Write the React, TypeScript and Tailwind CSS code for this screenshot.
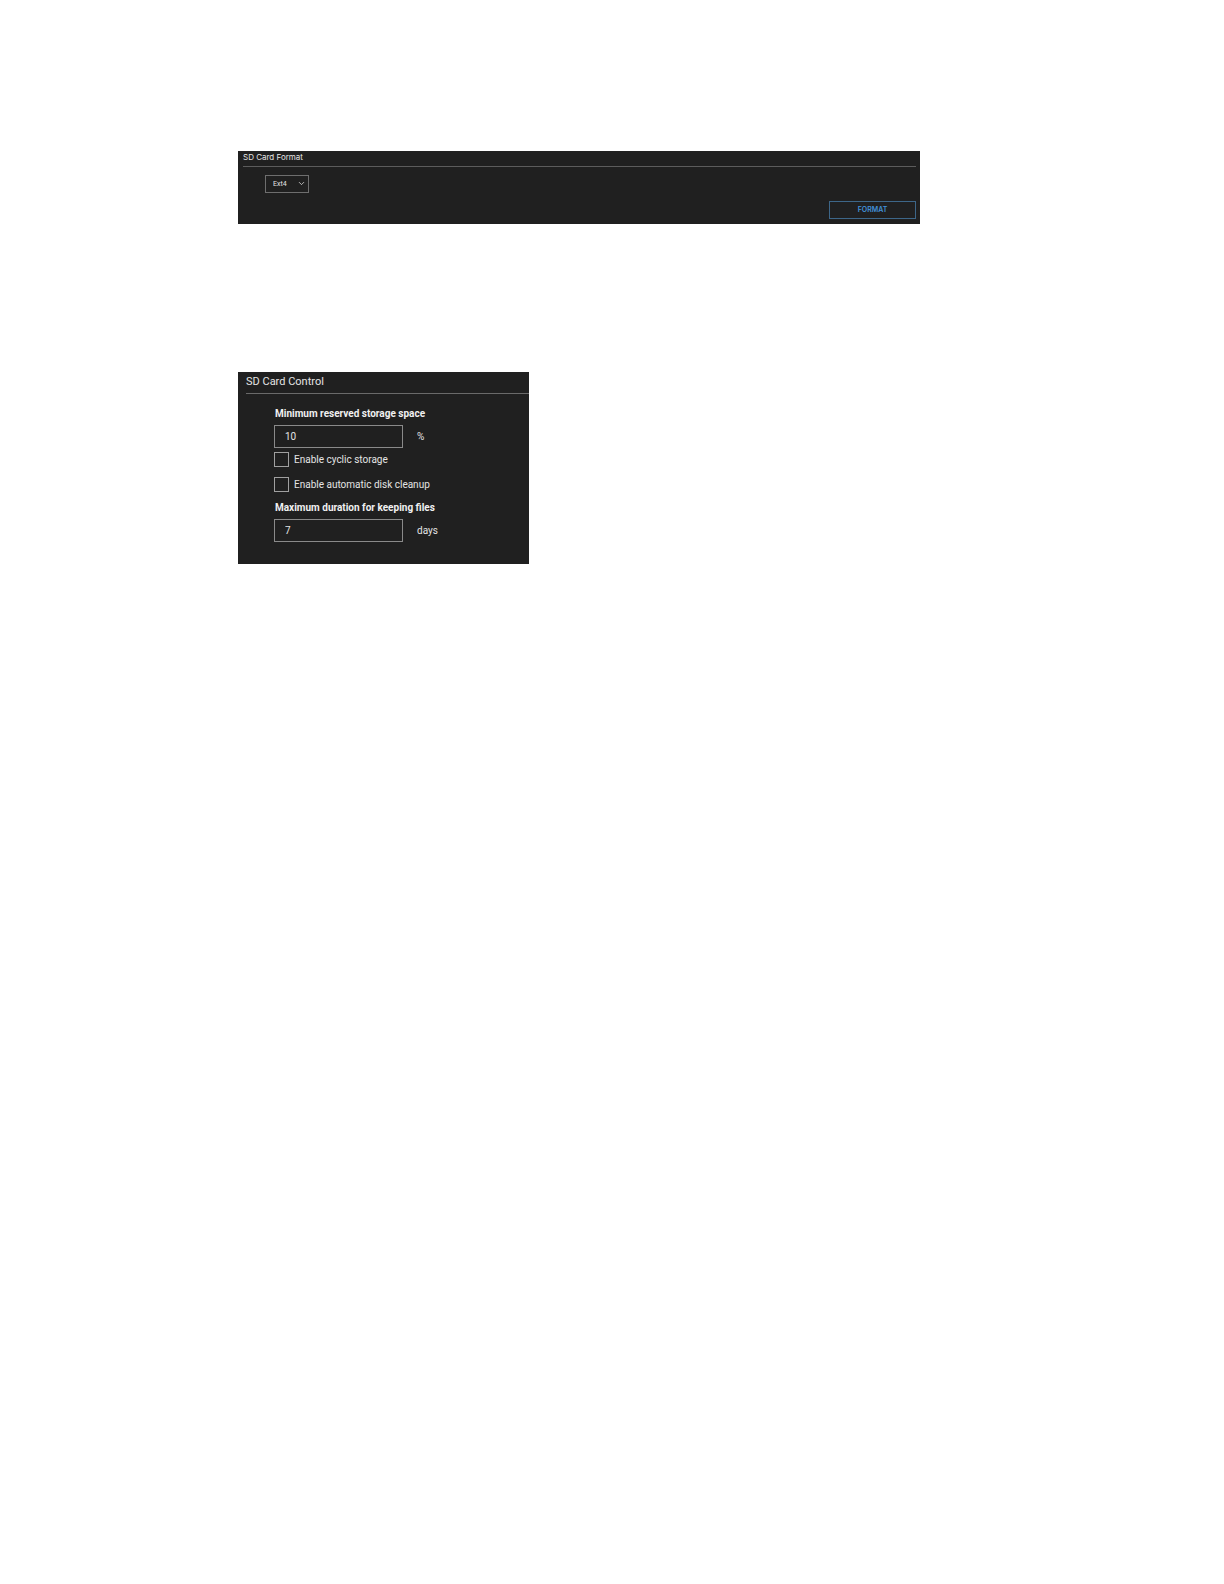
import React, { useState } from 'react';
import { ChevronDown } from 'lucide-react';

const NumberField = ({ id, label, unit, value, onChange }: any) => (
  <div>
    <label htmlFor={id} className="block pl-px text-[10px] leading-4 font-bold text-[#f0f0f0]">
      {label}
    </label>
    <div className="mt-[3px] flex items-center">
      <input
        id={id}
        type="text"
        value={value}
        onChange={(e) => onChange(e.target.value)}
        className="h-[23px] w-[129px] border border-[#8a8a8a] bg-transparent px-[10px] text-[10px] outline-none"
      />
      <span className="ml-[14px] text-[10px] leading-4">{unit}</span>
    </div>
  </div>
);

const CheckField = ({ label, checked, onChange }: any) => (
  <label className="flex w-fit items-center gap-[5px] text-[10px] leading-[15px]">
    <input
      type="checkbox"
      checked={checked}
      onChange={(e) => onChange(e.target.checked)}
      className="h-[15px] w-[15px] appearance-none border border-[#a0a0a0] checked:bg-[#4a9be8]"
    />
    {label}
  </label>
);

export default function App() {
  const [format, setFormat] = useState('Ext4');
  const [reserved, setReserved] = useState('10');
  const [duration, setDuration] = useState('7');
  const [cyclic, setCyclic] = useState(false);
  const [cleanup, setCleanup] = useState(false);

  const panelClass = 'bg-[#202020] text-[#e4e4e4]';

  return (
    <main className="min-h-screen bg-white pt-[151px] pr-6 pl-[238px] font-['Roboto',sans-serif]">
      {/* SD Card Format */}
      <section className={`max-w-[682px] pr-1 pb-[5px] pl-[5px] ${panelClass}`}>
        <h2 className="border-b border-[#5c5c5c] pb-[3px] font-['Inter',sans-serif] text-[8px] leading-3">
          SD Card Format
        </h2>
        <div className="relative mt-2 ml-[22px] h-[18px] w-11">
          <select
            aria-label="SD card format"
            value={format}
            onChange={(e) => setFormat(e.target.value)}
            className="block h-full w-full appearance-none border border-[#6e6e6e] bg-[#202020] pl-[7px] text-[7px] leading-3 outline-none"
          >
            <option>Ext4</option>
            <option>FAT32</option>
          </select>
          <ChevronDown size={9} strokeWidth={2} className="pointer-events-none absolute top-[4px] right-[3px]" />
        </div>
        <div className="mt-2 flex justify-end">
          <button className="h-[18px] w-[87px] border border-[#3d6688] font-['Inter',sans-serif] text-[7px] leading-3 font-semibold text-[#4190d8]">
            FORMAT
          </button>
        </div>
      </section>

      {/* SD Card Control */}
      <section className={`mt-[148px] max-w-[291px] pb-[22px] pl-2 ${panelClass}`}>
        <h2 className="border-b border-[#6a6a6a] pt-[2px] pb-[3px] text-[11px] leading-4">SD Card Control</h2>
        <div className="mt-3 ml-7">
          <NumberField
            id="reserved"
            label="Minimum reserved storage space"
            unit="%"
            value={reserved}
            onChange={setReserved}
          />
          <div className="mt-1 mb-2 flex flex-col gap-[10px]">
            <CheckField label="Enable cyclic storage" checked={cyclic} onChange={setCyclic} />
            <CheckField label="Enable automatic disk cleanup" checked={cleanup} onChange={setCleanup} />
          </div>
          <NumberField
            id="duration"
            label="Maximum duration for keeping files"
            unit="days"
            value={duration}
            onChange={setDuration}
          />
        </div>
      </section>
    </main>
  );
}
